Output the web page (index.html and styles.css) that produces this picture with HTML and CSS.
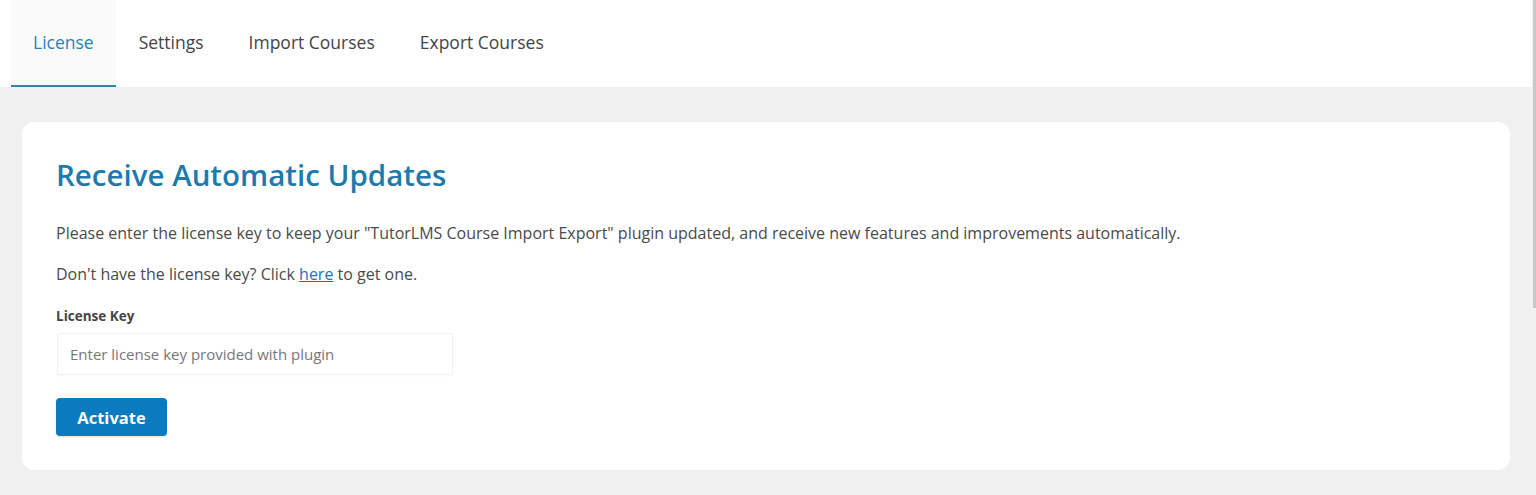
FILE: index.html
```html
<!DOCTYPE html>
<html lang="en">
<head>
<meta charset="utf-8">
<title>License</title>
<link rel="stylesheet" href="styles.css">
</head>
<body>
<div class="page">
  <nav class="tabs">
    <a class="tab active" href="#">License</a>
    <a class="tab" href="#">Settings</a>
    <a class="tab" href="#">Import Courses</a>
    <a class="tab" href="#">Export Courses</a>
  </nav>
  <main class="content">
    <section class="card">
      <h1 class="title">Receive Automatic Updates</h1>
      <p class="text">Please enter the license key to keep your "TutorLMS Course Import Export" plugin updated, and receive new features and improvements automatically.</p>
      <p class="text">Don't have the license key? Click <a href="#" class="link">here</a> to get one.</p>
      <label class="label" for="key">License Key</label>
      <input class="input" id="key" type="text" placeholder="Enter license key provided with plugin">
      <button class="btn" type="button">Activate</button>
    </section>
  </main>
</div>
<div class="scrollbar"></div>
</body>
</html>
```
FILE: styles.css
```css
* { box-sizing: border-box; }
html, body { margin: 0; padding: 0; }
body {
  background: #f0f0f0;
  font-family: "Open Sans", "Noto Sans", sans-serif;
  color: #3c434a;
  width: 1536px;
  height: 495px;
  overflow: hidden;
  position: relative;
}
.page { width: 1532px; }
.tabs {
  display: flex;
  background: #fff;
  height: 87px;
  padding-left: 11px;
}
.tab {
  display: flex;
  align-items: center;
  padding: 0 22px 2px 22px;
  margin-right: 1px;
  font-size: 17.5px;
  color: #444;
  text-decoration: none;
  border-bottom: 2px solid transparent;
}
.tab.active {
  background: #fafafa;
  color: #2983ad;
  border-bottom-color: #3485a5;
}
.content {
  padding: 35px 22px 25px 22px;
}
.card {
  background: #fff;
  border-radius: 12px;
  padding: 33px 34px 34px 34px;
  display: flex;
  flex-direction: column;
  align-items: flex-start;
  height: 348px;
}
.title {
  margin: 0;
  font-size: 29.5px;
  font-weight: 600;
  color: #1d7bab;
  line-height: 40px;
}
.text {
  margin: 0;
  font-size: 16px;
  line-height: 22px;
  color: #4a4a4a;
}
.title + .text { margin-top: 27px; }
.text + .text { margin-top: 19px; }
.link { color: #2271b1; }
.label {
  margin-top: 23px;
  font-size: 13.5px;
  font-weight: 700;
  color: #444;
  line-height: 16px;
}
.input {
  margin-top: 9px;
  margin-left: 1px;
  width: 396px;
  height: 42px;
  border: 1px solid #f2f2f2;
  border-radius: 2px;
  padding: 0 12px;
  font-family: inherit;
  font-size: 15px;
  color: #333;
  background: #fff;
  box-shadow: 0 1px 2px rgba(0,0,0,0.03);
}
.input::placeholder { color: #777; }
.btn {
  margin-top: 23px;
  width: 111px;
  height: 38px;
  background: #0b7bbf;
  color: #fff;
  border: none;
  border-radius: 4px;
  font-family: inherit;
  font-size: 16.5px;
  font-weight: 700;
  box-shadow: 0 1px 2px rgba(0,0,0,0.12);
}
.scrollbar {
  position: absolute;
  right: 0;
  top: 0;
  width: 3px;
  height: 308px;
  background: #c8c8c8;
}
```
